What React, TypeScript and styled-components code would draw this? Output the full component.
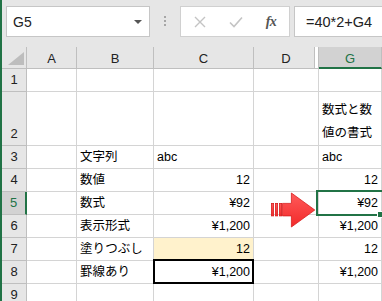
import React from 'react';
import styled, { createGlobalStyle } from 'styled-components';

const Global = createGlobalStyle`
  html, body { margin: 0; padding: 0; background: #fff; }
  body { font-family: "Liberation Sans", "Noto Sans CJK JP", sans-serif; }
  * { box-sizing: border-box; }
`;

const Frame = styled.div`
  position: relative;
  width: 382px;
  height: 301px;
  overflow: hidden;
  border-left: 2px solid #217346;
  background: #fff;
  display: flex;
  flex-direction: column;
`;

const Toolbar = styled.div`
  flex: none;
  height: 47px;
  background: #e6e6e6;
  display: flex;
  align-items: flex-start;
  padding: 6px 0 0 4px;
`;

const NameBox = styled.div`
  flex: none;
  width: 144px;
  height: 31px;
  background: #fff;
  border: 1px solid #c6c6c6;
  display: flex;
  align-items: center;
  justify-content: space-between;
  padding: 0 6px;
  font-size: 14px;
  color: #222;
`;

const DropArrow = styled.span`
  width: 0;
  height: 0;
  border-left: 4px solid transparent;
  border-right: 4px solid transparent;
  border-top: 4px solid #555;
  margin-right: 1px;
`;

const Grip = styled.div`
  flex: none;
  margin: 10px 0 0 14px;
  width: 2px;
  display: flex;
  flex-direction: column;
  gap: 2px;
`;

const GripDot = styled.span`
  width: 2px;
  height: 2px;
  background: #a6a6a6;
`;

const ButtonBox = styled.div`
  flex: none;
  margin-left: 14px;
  width: 110px;
  height: 31px;
  background: #fff;
  border: 1px solid #d0d0d0;
  display: flex;
  align-items: center;
`;

const IconSlot = styled.span<{ $w: number }>`
  flex: none;
  width: ${(p) => p.$w}px;
  display: flex;
  justify-content: center;
  align-items: center;
`;

const FxLabel = styled.span`
  font-family: "Liberation Serif", "DejaVu Serif", serif;
  font-style: italic;
  font-weight: bold;
  font-size: 14px;
  color: #555;
  letter-spacing: -0.5px;
`;

const FormulaBox = styled.div`
  flex: none;
  margin-left: 4px;
  width: 120px;
  height: 31px;
  background: #fff;
  border: 1px solid #c6c6c6;
  display: flex;
  align-items: center;
  padding-left: 11px;
  font-size: 14.5px;
  color: #222;
`;

const Sheet = styled.div`
  flex: none;
  display: grid;
  grid-template-columns: 25px 50px 77px 100px 65px 63px;
  grid-template-rows: 22px 23px 54px repeat(7, 23px);
  font-size: 12.5px;
  color: #000;
`;

const Corner = styled.div`
  background: #e6e6e6;
  border-right: 1px solid #bfbfbf;
  border-bottom: 1px solid #bfbfbf;
  display: flex;
  align-items: flex-end;
  justify-content: flex-end;
  padding: 0 0 3px 0;
`;

const ColHead = styled.div<{ $sel?: boolean; $hidden?: boolean }>`
  background: ${(p) => (p.$sel ? '#d2d2d2' : '#e6e6e6')};
  border-right: 1px solid #bfbfbf;
  border-bottom: ${(p) => (p.$sel ? '2px solid #217346' : '1px solid #bfbfbf')};
  color: ${(p) => (p.$sel ? '#217346' : '#222')};
  font-size: 13px;
  display: flex;
  align-items: center;
  justify-content: center;
  padding-top: 2px;
  box-shadow: ${(p) => (p.$hidden ? 'inset -3px 0 0 #fff, inset -4px 0 0 #bfbfbf' : 'none')};
`;

const RowHead = styled.div<{ $sel?: boolean }>`
  background: ${(p) => (p.$sel ? '#d2d2d2' : '#e6e6e6')};
  border-right: ${(p) => (p.$sel ? '2px solid #217346' : '1px solid #bfbfbf')};
  border-bottom: 1px solid #bfbfbf;
  color: ${(p) => (p.$sel ? '#217346' : '#222')};
  font-size: 13px;
  display: flex;
  align-items: flex-end;
  justify-content: center;
  padding-bottom: 3px;
  line-height: 16px;
`;

const Cell = styled.div<{ $num?: boolean; $fill?: string }>`
  background: ${(p) => p.$fill || '#fff'};
  border-right: 1px solid #d4d4d4;
  border-bottom: 1px solid #d4d4d4;
  display: flex;
  align-items: flex-end;
  justify-content: ${(p) => (p.$num ? 'flex-end' : 'flex-start')};
  padding: 0 3px 3px 3px;
  line-height: 16px;
  white-space: nowrap;
  overflow: visible;
`;

const WrapText = styled.div`
  white-space: normal;
  line-height: 23px;
  margin-bottom: -3px;
`;

const Selection = styled.div`
  position: absolute;
  left: 314px;
  top: 190px;
  width: 72px;
  height: 26px;
  border: 2px solid #217346;
  pointer-events: none;
`;

const FillHandle = styled.div`
  position: absolute;
  left: 375px;
  top: 211px;
  width: 7px;
  height: 7px;
  background: #217346;
  border: 1px solid #fff;
`;

const BoxedBorder = styled.div`
  position: absolute;
  left: 151px;
  top: 259px;
  width: 101px;
  height: 25px;
  border: 2px solid #000;
  pointer-events: none;
`;

const ArrowWrap = styled.div`
  position: absolute;
  left: 266px;
  top: 192px;
  width: 48px;
  height: 37px;
`;

const cols = ['A', 'B', 'C', 'D', 'G'];

type Row = { n: number; b?: string; c?: string; cNum?: boolean; cFill?: string; g?: React.ReactNode; gNum?: boolean };

const rows: Row[] = [
  { n: 1 },
  { n: 2, g: <WrapText>数式と数<br />値の書式</WrapText> },
  { n: 3, b: '文字列', c: 'abc', g: 'abc' },
  { n: 4, b: '数値', c: '12', cNum: true, g: '12', gNum: true },
  { n: 5, b: '数式', c: '¥92', cNum: true, g: '¥92', gNum: true },
  { n: 6, b: '表示形式', c: '¥1,200', cNum: true, g: '¥1,200', gNum: true },
  { n: 7, b: '塗りつぶし', c: '12', cNum: true, cFill: '#fff2cc', g: '12', gNum: true },
  { n: 8, b: '罫線あり', c: '¥1,200', cNum: true, g: '¥1,200', gNum: true },
  { n: 9 },
];

export default function App() {
  return (
    <>
      <Global />
      <Frame>
        <Toolbar>
          <NameBox>
            <span>G5</span>
            <DropArrow />
          </NameBox>
          <Grip>
            <GripDot />
            <GripDot />
            <GripDot />
          </Grip>
          <ButtonBox>
            <IconSlot $w={38}>
              <svg width="12" height="12" viewBox="0 0 12 12">
                <path d="M1 1 L11 11 M11 1 L1 11" stroke="#c4c4c4" strokeWidth="1.4" fill="none" />
              </svg>
            </IconSlot>
            <IconSlot $w={34}>
              <svg width="14" height="12" viewBox="0 0 14 12">
                <path d="M1 6.5 L5 10.5 L13 1.5" stroke="#c4c4c4" strokeWidth="1.6" fill="none" />
              </svg>
            </IconSlot>
            <IconSlot $w={36}>
              <FxLabel>fx</FxLabel>
            </IconSlot>
          </ButtonBox>
          <FormulaBox>=40*2+G4</FormulaBox>
        </Toolbar>
        <Sheet>
          <Corner>
            <svg width="17" height="13" viewBox="0 0 17 13" style={{ marginRight: 1 }}>
              <polygon points="16,0 16,13 0,13" fill="#bdbdbd" />
            </svg>
          </Corner>
          {cols.map((c) => (
            <ColHead key={c} $sel={c === 'G'} $hidden={c === 'D'}>
              {c}
            </ColHead>
          ))}
          {rows.map((r) => (
            <React.Fragment key={r.n}>
              <RowHead $sel={r.n === 5}>{r.n}</RowHead>
              <Cell />
              <Cell>{r.b}</Cell>
              <Cell $num={r.cNum} $fill={r.cFill}>{r.c}</Cell>
              <Cell />
              <Cell $num={r.gNum}>{r.g}</Cell>
            </React.Fragment>
          ))}
        </Sheet>
        <ArrowWrap>
          <svg width="48" height="37" viewBox="0 0 48 37">
            <defs>
              <linearGradient id="ar" x1="0" y1="0" x2="0" y2="1">
                <stop offset="0" stopColor="#ff5a5a" />
                <stop offset="1" stopColor="#f22a2a" />
              </linearGradient>
            </defs>
            <g fill="url(#ar)" stroke="#d81e1e" strokeWidth="0.8">
              <rect x="3.4" y="11.4" width="2.2" height="12.5" />
              <rect x="7.4" y="11.4" width="2.2" height="12.5" />
              <rect x="11.4" y="11.4" width="2.2" height="12.5" />
              <path d="M14.4 11.4 H23.4 V1 L46.8 18 L23.4 35 V23.9 H14.4 Z" />
            </g>
          </svg>
        </ArrowWrap>
        <BoxedBorder />
        <Selection />
        <FillHandle />
      </Frame>
    </>
  );
}
